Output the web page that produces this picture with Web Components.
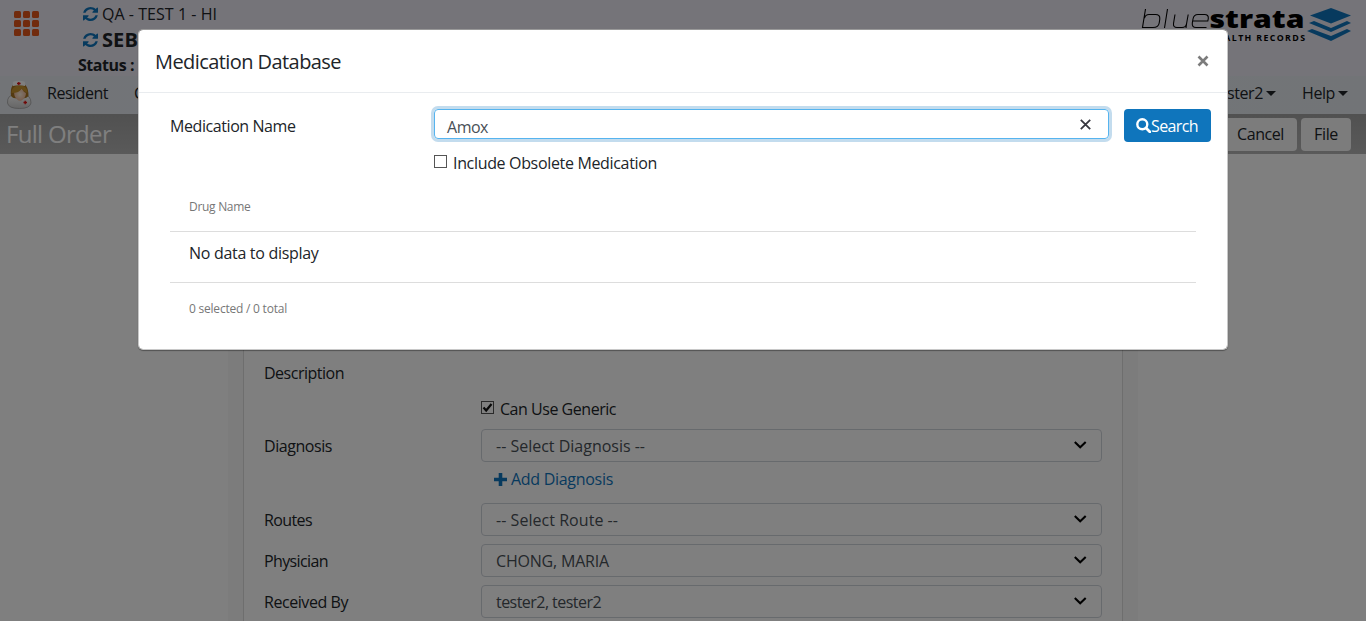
<!DOCTYPE html>
<html lang="en"><head><meta charset="utf-8"><title>Medication Database</title>
<style>html,body{margin:0;height:100%;overflow:hidden}body{font:16px/24px "Open Sans","Noto Sans",sans-serif;color:#212529;background:#fff}</style></head>
<body><order-app></order-app>
<script>
const define=(name,html,setup)=>customElements.define(name,class extends HTMLElement{
  constructor(){super();this.attachShadow({mode:'open'}).innerHTML=html;}
  connectedCallback(){if(setup)setup(this,this.shadowRoot);}
});
// Text run whose tracking is adjusted to an exact advance width.
define('fit-text','<style>:host{display:inline-block;white-space:nowrap;flex:none;justify-self:start}</style><slot></slot>',h=>{
  const t=h.textContent,w=+h.getAttribute('w');
  h.style.letterSpacing='0px';
  const n=h.getBoundingClientRect().width;
  if(w&&n){h.style.letterSpacing=((w-n)/t.length)+'px';h.style.width=w+'px';}
});
define('sync-icon',`<style>:host{display:block;width:15px;height:14px;flex:none}svg{display:block}</style>
<svg width="15" height="14" viewBox="0 0 1536 1536" preserveAspectRatio="none"><path fill="#0f75bc" d="M1511 928q0 5-1 7-64 268-268 434.500T764 1536q-146 0-282.500-55T238 1324l-129 129q-19 19-45 19t-45-19-19-45V960q0-26 19-45t45-19h448q26 0 45 19t19 45-19 45l-137 137q71 66 161 102t187 36q134 0 250-65t186-179q11-17 53-117 8-23 30-23h192q13 0 22.500 9.500t9.500 22.500zm25-800v448q0 26-19 45t-45 19h-448q-26 0-45-19t-19-45 19-45l138-138Q969 256 768 256q-134 0-250 65T332 500q-11 17-53 117-8 23-30 23H50q-13 0-22.500-9.500T18 608v-7q65-268 270-434.500T768 0q146 0 284 55.500T1297 212l130-129q19-19 45-19t45 19 19 45z"/></svg>`);
define('brand-logo',`<style>:host{display:block;width:212px;height:40px}text{font-family:"Open Sans",sans-serif}</style>
<svg width="212" height="40" viewBox="1141 5 212 40"><g fill="none" stroke="#000" stroke-width="1.1"><path d="M1145.500 9L1142.500 27.500H1153Q1158.500 27.500 1159.200 23L1159.800 19Q1160.200 14.500 1155.500 14.500H1149Q1145.500 14.500 1144.500 18M1167.500 9L1164.500 28M1175 14.500L1173.500 23.500Q1173 27.500 1177 27.500H1182Q1186 27.500 1186.600 23.500L1188.200 14.500M1186.600 23.500L1186 28M1192.500 21H1207.800L1208.300 18.500Q1208.700 14.500 1204.500 14.500H1198Q1193.800 14.500 1193 19L1192.300 23Q1191.800 27.500 1196 27.500H1206.500"/></g>
<text x="1209.500" y="27.500" font-size="24.500" font-weight="800" textLength="95" lengthAdjust="spacingAndGlyphs">strata</text>
<text x="1210" y="41" font-size="8.800" font-weight="700" textLength="95" lengthAdjust="spacing">HEALTH RECORDS</text>
<g fill="#0f75bc"><path d="M1331 8L1351 15.500 1331 23.500 1310 15.500z"/><path d="M1309 23l5-2 17 7 16-7 4 2-20 9z"/><path d="M1307 31l5-2 19 7 16-7 4 2-20 10z"/></g></svg>`);
define('nurse-icon',`<style>:host{display:block;width:26px;height:30px;flex:none}svg{display:block}</style>
<svg width="26" height="30" viewBox="0 0 26 30"><defs><linearGradient id="g" x2="0" y2="1"><stop stop-color="#fff"/><stop offset="1" stop-color="#ccc"/></linearGradient><radialGradient id="f"><stop stop-color="#fff0dc"/><stop offset="1" stop-color="#eeb998"/></radialGradient></defs>
<path d="M0.500 23Q0 15 8 14.500h8q8 .5 8 8.500Q23 28.500 12.500 28.500 1.500 28.500 .5 23z" fill="url(#g)" stroke="#999" stroke-width=".7"/><path d="M4 16Q2.500 2.500 12 2.500t9.500 13.500q-3 3-6 2h-6q-3 1-5.500-2z" fill="#a87422"/><path d="M7 12q6-1 8-4 1 4 4 5 0 5-4.500 7.500-1.500.7-3 0Q7 18 7 12z" fill="url(#f)"/><path d="M4.500 13Q4.500 5 14 5.500q6.500.5 6.500 7.500-4-1-6-4.500-2 4.500-10 4.500z" fill="#c8942f"/><path d="M6 6Q5.500 1.500 7 1.500q5-1.500 10 0 1.500 0 1 4.500-6-1.500-12 0z" fill="#fff"/><path d="M10 3.500h3.600M11.800 2v3" stroke="#df1010" stroke-width="1.300"/><path d="M16.500 22.500h3.500M18.200 20.800v3.500" stroke="#df1010" stroke-width="1.300"/></svg>`);
define('app-header',`<style>:host{display:flex;height:76px;background:#ebe8f3;justify-content:space-between}
.l{display:flex}.apps{display:grid;grid-template:repeat(3,7px)/repeat(3,7px);gap:2.200px;margin:11px 0 0 14px;width:25px;height:25px}.apps i{background:#e2561b;border-radius:1.500px}
.id{margin-left:39px;width:240px}.r{display:flex;align-items:center;gap:4px;padding-left:5px;height:26px}.s{height:24px;line-height:24px;font-weight:700}
.big{font-size:20px;font-weight:700}brand-logo{margin:5px 13px 0 0}</style>
<div class="l"><div class="apps"><i></i><i></i><i></i><i></i><i></i><i></i><i></i><i></i><i></i></div>
<div class="id"><div class="r" style="padding-top:1px"><sync-icon></sync-icon><fit-text w="115">QA - TEST 1 - HI</fit-text></div><div class="r"><sync-icon></sync-icon><fit-text class="big" w="47">SEBS</fit-text></div><div class="s"><fit-text w="56">Status :</fit-text></div></div></div><brand-logo></brand-logo>`);
define('nav-bar',`<style>:host{display:flex;height:38px;align-items:center;justify-content:space-between;background:linear-gradient(90deg,#e5e8ee,#e3edf6 45%,#e5e9ee);padding:0 18px 4px 7px;box-sizing:border-box}
div{display:flex;align-items:center}nurse-icon{margin-top:4px}.c{border:5px solid transparent;border-top-color:#212529;border-bottom:0;margin-left:3px}</style>
<div><nurse-icon></nurse-icon><fit-text w="61" style="margin-left:14px">Resident</fit-text><fit-text w="51" style="margin-left:26px">Clinical</fit-text></div>
<div><fit-text w="50">tester2</fit-text><i class="c"></i><fit-text w="33" style="margin-left:26px">Help</fit-text><i class="c"></i></div>`);
define('title-bar',`<style>:host{display:flex;height:40px;box-sizing:border-box;background:linear-gradient(#a2a2a2,#b4b4b4);align-items:center;justify-content:space-between;padding:0 15px 0 6px;color:#fff;font-size:24px}
div{display:flex;gap:4px}b{display:flex;height:33px;align-items:center;justify-content:center;border-radius:4px;background:#f8f8f8;color:#212529;font:16px "Open Sans",sans-serif}</style>
<fit-text w="105">Full Order</fit-text><div><b style="width:73px"><fit-text w="47">Cancel</fit-text></b><b style="width:50px"><fit-text w="24">File</fit-text></b></div>`);
define('select-box',`<style>:host{display:flex;box-sizing:border-box;width:621px;height:33px;border:1px solid #ced4da;border-radius:4px;align-items:center;justify-content:space-between;padding:0 14px;color:#495057}svg{margin-top:-2px}</style>
<slot></slot><svg width="14" height="10" viewBox="0 0 14 10"><path d="M1.800 2L7.200 7.200 12.700 2" fill="none" stroke="#000" stroke-width="2.100"/></svg>`);
define('check-box',`<style>:host{display:flex;align-items:center;gap:6px}svg{flex:none;margin-top:-3px}</style><svg width="13" height="13"><rect x=".5" y=".5" width="12" height="12" fill="#fff" stroke="#555"/><path class="m" d="M2.500 6.500L5.200 9.500 10.500 3" fill="none" stroke="#111" stroke-width="2.200"/></svg><slot></slot>`,(h,r)=>{if(!h.hasAttribute('checked'))r.querySelector('.m').remove();});
define('form-row',`<style>:host{display:grid;grid-template-columns:217px 621px;height:33px;align-items:center}</style><div><slot name="label"></slot></div><slot></slot>`);
define('order-form',`<style>:host{display:block;box-sizing:border-box;width:910px;height:600px;margin:0 auto;background:#f9f9f9;padding:0 15px}
.p{box-sizing:border-box;height:100%;background:#fff;border:1px solid #ddd;border-width:0 1px;padding:202px 20px 0;display:flex;flex-direction:column}
.a{display:flex;align-items:center;gap:4px;color:#0f75bc;margin:5px 0 12px 230px;height:24px}.g{margin-top:8px}</style>
<div class="p"><form-row><fit-text slot="label" w="80">Description</fit-text></form-row>
<form-row style="margin-top:3px"><check-box checked><fit-text w="116">Can Use Generic</fit-text></check-box></form-row>
<form-row style="margin-top:4px"><fit-text slot="label" w="68">Diagnosis</fit-text><select-box><fit-text w="149">-- Select Diagnosis --</fit-text></select-box></form-row>
<div class="a"><svg width="13" height="13"><path d="M6.500 0v13M0 6.500h13" stroke="#0f75bc" stroke-width="3.600"/></svg><fit-text w="102">Add Diagnosis</fit-text></div>
<form-row><fit-text slot="label" w="48">Routes</fit-text><select-box><fit-text w="122">-- Select Route --</fit-text></select-box></form-row>
<form-row class="g"><fit-text slot="label" w="64">Physician</fit-text><select-box><fit-text w="113">CHONG, MARIA</fit-text></select-box></form-row>
<form-row class="g"><fit-text slot="label" w="84">Received By</fit-text><select-box><fit-text w="105">tester2, tester2</fit-text></select-box></form-row></div>`);
define('medication-dialog',`<style>:host{position:absolute;left:138px;top:29px;width:1090px;height:321px;box-sizing:border-box;background:#fff;background-clip:padding-box;border:1px solid #c8c8c8;border-top-color:#999;border-radius:5px;box-shadow:0 1px 1px rgba(0,0,0,.35)}
header{height:63px;box-sizing:border-box;border-bottom:1px solid #e9ecef;display:flex;align-items:center;justify-content:space-between;padding:2px 18px 0 16px;font-size:20px}header svg{margin-top:-3px}
.q{display:grid;grid-template-columns:264px 676px 87px;padding:16px 16px 0 31px;height:33px;align-items:start}.q>fit-text{margin-top:5px}
.in{box-sizing:border-box;width:675px;height:30px;border:1px solid #56b4ef;border-radius:4px;box-shadow:0 0 0 3px #c3dcee;display:flex;align-items:center;justify-content:space-between;padding:5px 17px 0 12px;color:#495057}.in svg{margin-top:-4px}
.b{height:33px;width:87px;margin-left:14px;background:#0f75bc;color:#fff;border-radius:4px;display:flex;align-items:center;padding-left:12px;box-sizing:border-box}
check-box{margin:9px 0 0 295px;height:24px}.t{margin:19px 31px 0 31px}.t>div{display:flex;align-items:center;padding-left:19px;box-sizing:border-box}.h,.f{font-size:12px;color:#777}.h{height:37px;padding-bottom:11px}.n{height:52px;border:solid #ddd;border-width:1px 0;padding-bottom:8px}.f{height:52px}</style>
<header><fit-text w="186">Medication Database</fit-text><svg width="12" height="12"><path d="M1.500 1.500l9 9m0-9l-9 9" stroke="#7c7c7c" stroke-width="2.600"/></svg></header>
<div class="q"><fit-text w="125.500">Medication Name</fit-text><div class="in"><fit-text w="41">Amox</fit-text><svg width="11" height="11"><path d="M.8 .8l9.400 9.400m0-9.400L.8 10.200" stroke="#37373f" stroke-width="1.800"/></svg></div>
<div class="b"><svg width="15" height="15" viewBox="0 0 15 15"><circle cx="6.300" cy="6.300" r="5" fill="none" stroke="#fff" stroke-width="2.400"/><path d="M10 10l4 4" stroke="#fff" stroke-width="2.800" stroke-linecap="round"/></svg><fit-text w="47">Search</fit-text></div></div>
<check-box><fit-text w="204">Include Obsolete Medication</fit-text></check-box>
<div class="t"><div class="h"><fit-text w="61.500">Drug Name</fit-text></div><div class="n"><fit-text w="129.500">No data to display</fit-text></div><div class="f"><fit-text w="98">0 selected / 0 total</fit-text></div></div>`);
define('order-app',`<style>:host{display:block;height:621px;overflow:hidden;position:relative}.o{position:absolute;inset:0;background:rgba(0,0,0,.5)}</style>
<app-header></app-header><nav-bar></nav-bar><title-bar></title-bar><order-form></order-form><div class="o"></div><medication-dialog></medication-dialog>`);
</script></body></html>
